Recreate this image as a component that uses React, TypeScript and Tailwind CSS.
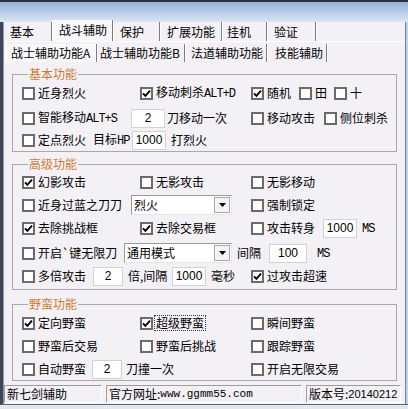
import React from 'react';

type CbProps = { label: React.ReactNode; checked?: boolean; w?: string; focus?: boolean };

const Box: React.FC<{ checked?: boolean }> = ({ checked }) => (
  <span className="w-[13px] h-[13px] border-2 border-[#6b6b6b] bg-white flex items-center justify-center shrink-0">
    {checked && (
      <svg width="9" height="9" viewBox="0 0 9 9">
        <path d="M1 4.3 L3.4 6.8 L8 1.6" fill="none" stroke="#000" strokeWidth="1.9" />
      </svg>
    )}
  </span>
);

const Cb: React.FC<CbProps> = ({ label, checked, w = '', focus }) => (
  <div className={`flex items-center shrink-0 ${w}`}>
    <Box checked={checked} />
    <span className={`ml-[3px] whitespace-nowrap ${focus ? 'outline-1 outline-dotted outline-[#333] outline-offset-[1px]' : ''}`}>
      {label}
    </span>
  </div>
);

const Num: React.FC<{ value: string; w: string }> = ({ value, w }) => (
  <div
    className={`${w} h-[19px] bg-white border border-[#d2d2d2] flex items-center justify-center shrink-0 font-['Liberation_Sans',sans-serif] text-[12px]`}
  >
    {value}
  </div>
);

const Select: React.FC<{ value: string; w: string }> = ({ value, w }) => (
  <div
    className={`${w} h-[20px] bg-white border border-t-[#9a9a9a] border-l-[#9a9a9a] border-b-[#e6e6e6] border-r-[#e6e6e6] flex items-center shrink-0`}
  >
    <span className="flex-1 pl-[2px] whitespace-nowrap">{value}</span>
    <span className="w-[16px] h-[16px] mr-[1px] bg-[#f4f4f4] border border-[#a8a8a8] flex items-center justify-center">
      <svg width="7" height="4" viewBox="0 0 7 4">
        <path d="M0 0 H7 L3.5 4 Z" fill="#000" />
      </svg>
    </span>
  </div>
);

const Mono: React.FC<{ children: React.ReactNode }> = ({ children }) => (
  <span className="font-['Liberation_Mono',monospace] text-[12px] tracking-[-1px]">{children}</span>
);

const Group: React.FC<{ title: string; className?: string; children: React.ReactNode }> = ({ title, className = '', children }) => (
  <fieldset className={`border border-[#a9a9a9] pl-[9px] ${className}`}>
    <legend className="ml-[6px] px-[1px] text-[#cc7d33] leading-[14px]">{title}</legend>
    {children}
  </fieldset>
);

const Row: React.FC<{ className?: string; children: React.ReactNode }> = ({ className = '', children }) => (
  <div className={`flex items-center h-[20px] ${className}`}>{children}</div>
);

const TABS1 = [
  { label: '基本', w: 'w-[44px]', pl: 'pl-[2px]' },
  { label: '战斗辅助', w: 'w-[61px]', pl: 'pl-[6px]', active: true },
  { label: '保护', w: 'w-[47px]', pl: 'pl-[7px]' },
  { label: '扩展功能', w: 'w-[62px]', pl: 'pl-[7px]' },
  { label: '挂机', w: 'w-[45px]', pl: 'pl-[5px]' },
  { label: '验证', w: 'w-[49px]', pl: 'pl-[7px]' },
];

const TABS2 = [
  { label: '战士辅助功能A', w: 'w-[92px]', pl: 'pl-[5px]', active: true },
  { label: '战士辅助功能B', w: 'w-[88px]', pl: 'pl-[3px]' },
  { label: '法道辅助功能', w: 'w-[82px]', pl: 'pl-[6px]' },
  { label: '技能辅助', w: 'w-[60px]', pl: 'pl-[8px]' },
];

export default function App() {
  return (
    <div className="w-[408px] h-[409px] overflow-hidden flex flex-col bg-[#3d4757] font-['Noto_Sans_CJK_SC',sans-serif] text-[12px] text-black leading-none">
      {/* title bar bottom */}
      <div className="h-[2px] bg-[#2f3237]" />
      <div className="h-[20px] bg-linear-to-b from-[#98b1d9] to-[#dbe5f2]" />

      <div className="flex flex-1 min-h-0">
        <div className="w-[4px] bg-[#3d4757] border-r border-[#8b97a8]" />

        <div className="w-[401px] bg-[#f3f1f5] flex flex-col">
          {/* main tabs */}
          <div className="h-[19px] flex items-stretch pl-[4px]">
            {TABS1.map((t) => (
              <div
                key={t.label}
                className={`${t.w} ${t.pl} flex items-center border-r border-[#7d7d7d] shadow-[1px_0_0_#ffffff] ${
                  t.active ? 'bg-[#f8f7fa] border-l border-l-white -mt-[2px] pb-[2px]' : 'pt-[1px]'
                }`}
              >
                {t.label}
              </div>
            ))}
          </div>
          <div className="h-[1px] bg-white" />

          {/* sub tabs */}
          <div className="h-[20px] flex items-stretch pl-[1px] pt-[2px]">
            {TABS2.map((t) => (
              <div
                key={t.label}
                className={`${t.w} ${t.pl} flex items-center border-r border-[#7d7d7d] shadow-[1px_0_0_#ffffff] ${
                  t.active ? 'bg-[#f8f7fa] border-l border-l-white' : ''
                }`}
              >
                {t.label}
              </div>
            ))}
          </div>

          <div className="px-[8px] flex flex-col">
            <Group title="基本功能" className="mt-[5px] pb-[1px]">
              <Row className="mt-[2px]">
                <Cb label="近身烈火" w="w-[118px]" />
                <Cb label={<>移动刺杀<Mono>ALT+D</Mono></>} checked w="w-[111px]" />
                <Cb label="随机" checked w="w-[48px]" />
                <Cb label="田" w="w-[35px]" />
                <Cb label="十" />
              </Row>
              <Row className="mt-[5px]">
                <Cb label={<>智能移动<Mono>ALT+S</Mono></>} w="w-[109px]" />
                <Num value="2" w="w-[34px]" />
                <span className="ml-[2px] w-[84px]">刀移动一次</span>
                <Cb label="移动攻击" w="w-[73px]" />
                <Cb label="侧位刺杀" />
              </Row>
              <Row className="mt-[2px]">
                <Cb label="定点烈火" w="w-[71px]" />
                <span className="w-[39px]">目标<Mono>HP</Mono></span>
                <Num value="1000" w="w-[34px]" />
                <span className="ml-[5px]">打烈火</span>
              </Row>
            </Group>

            <Group title="高级功能" className="mt-[5px] pb-[3px]">
              <Row className="mt-[1px]">
                <Cb label="幻影攻击" checked w="w-[118px]" />
                <Cb label="无影攻击" w="w-[111px]" />
                <Cb label="无影移动" />
              </Row>
              <Row className="mt-[3px]">
                <Cb label="近身过蓝之刀刀" w="w-[109px]" />
                <Select value="烈火" w="w-[101px]" />
                <span className="w-[19px]" />
                <Cb label="强制锁定" />
              </Row>
              <Row className="mt-[3px]">
                <Cb label="去除挑战框" checked w="w-[118px]" />
                <Cb label="去除交易框" checked w="w-[111px]" />
                <Cb label="攻击转身" w="w-[72px]" />
                <Num value="1000" w="w-[34px]" />
                <span className="ml-[5px]"><Mono>MS</Mono></span>
              </Row>
              <Row className="mt-[5px]">
                <Cb label="开启`键无限刀" w="w-[102px]" />
                <Select value="通用模式" w="w-[108px]" />
                <span className="ml-[5px] w-[32px]">间隔</span>
                <Num value="100" w="w-[38px]" />
                <span className="ml-[10px]"><Mono>MS</Mono></span>
              </Row>
              <Row className="mt-[3px]">
                <Cb label="多倍攻击" w="w-[71px]" />
                <Num value="2" w="w-[30px]" />
                <span className="ml-[5px] w-[44px]">倍,间隔</span>
                <Num value="1000" w="w-[34px]" />
                <span className="ml-[5px] w-[40px]">毫秒</span>
                <Cb label="过攻击超速" checked />
              </Row>
            </Group>

            <Group title="野蛮功能" className="mt-[7px] pb-[1px]">
              <Row className="mt-[2px]">
                <Cb label="定向野蛮" checked w="w-[118px]" />
                <Cb label="超级野蛮" checked focus w="w-[111px]" />
                <Cb label="瞬间野蛮" />
              </Row>
              <Row className="mt-[3px]">
                <Cb label="野蛮后交易" w="w-[118px]" />
                <Cb label="野蛮后挑战" w="w-[111px]" />
                <Cb label="跟踪野蛮" />
              </Row>
              <Row className="mt-[3px]">
                <Cb label="自动野蛮" w="w-[70px]" />
                <Num value="2" w="w-[30px]" />
                <span className="ml-[4px] w-[125px]">刀撞一次</span>
                <Cb label="开启无限交易" />
              </Row>
            </Group>
          </div>

          {/* status bar */}
          <div className="mt-auto mb-[1px] h-[18px] flex gap-[4px]">
            <div className="w-[98px] border border-t-[#9c9c9c] border-l-[#9c9c9c] border-b-white border-r-white flex items-center pl-[2px]">
              新七剑辅助
            </div>
            <div className="w-[196px] border border-t-[#9c9c9c] border-l-[#9c9c9c] border-b-white border-r-white flex items-center pl-[2px] whitespace-nowrap">
              官方网址:<span className="font-['Liberation_Mono',monospace] text-[11px]">www.ggmm55.com</span>
            </div>
            <div className="w-[95px] border border-t-[#9c9c9c] border-l-[#9c9c9c] border-b-white border-r-white flex items-center pl-[2px] whitespace-nowrap">
              版本号:<span className="font-['Liberation_Sans',sans-serif] text-[11px]">20140212</span>
            </div>
          </div>
        </div>

        <div className="w-[3px] bg-[#bcd6ee] border-l border-[#6f7f93]" />
      </div>

      <div className="h-[5px] bg-[#e4e8ee] border-t border-[#5e6470]" />
    </div>
  );
}
